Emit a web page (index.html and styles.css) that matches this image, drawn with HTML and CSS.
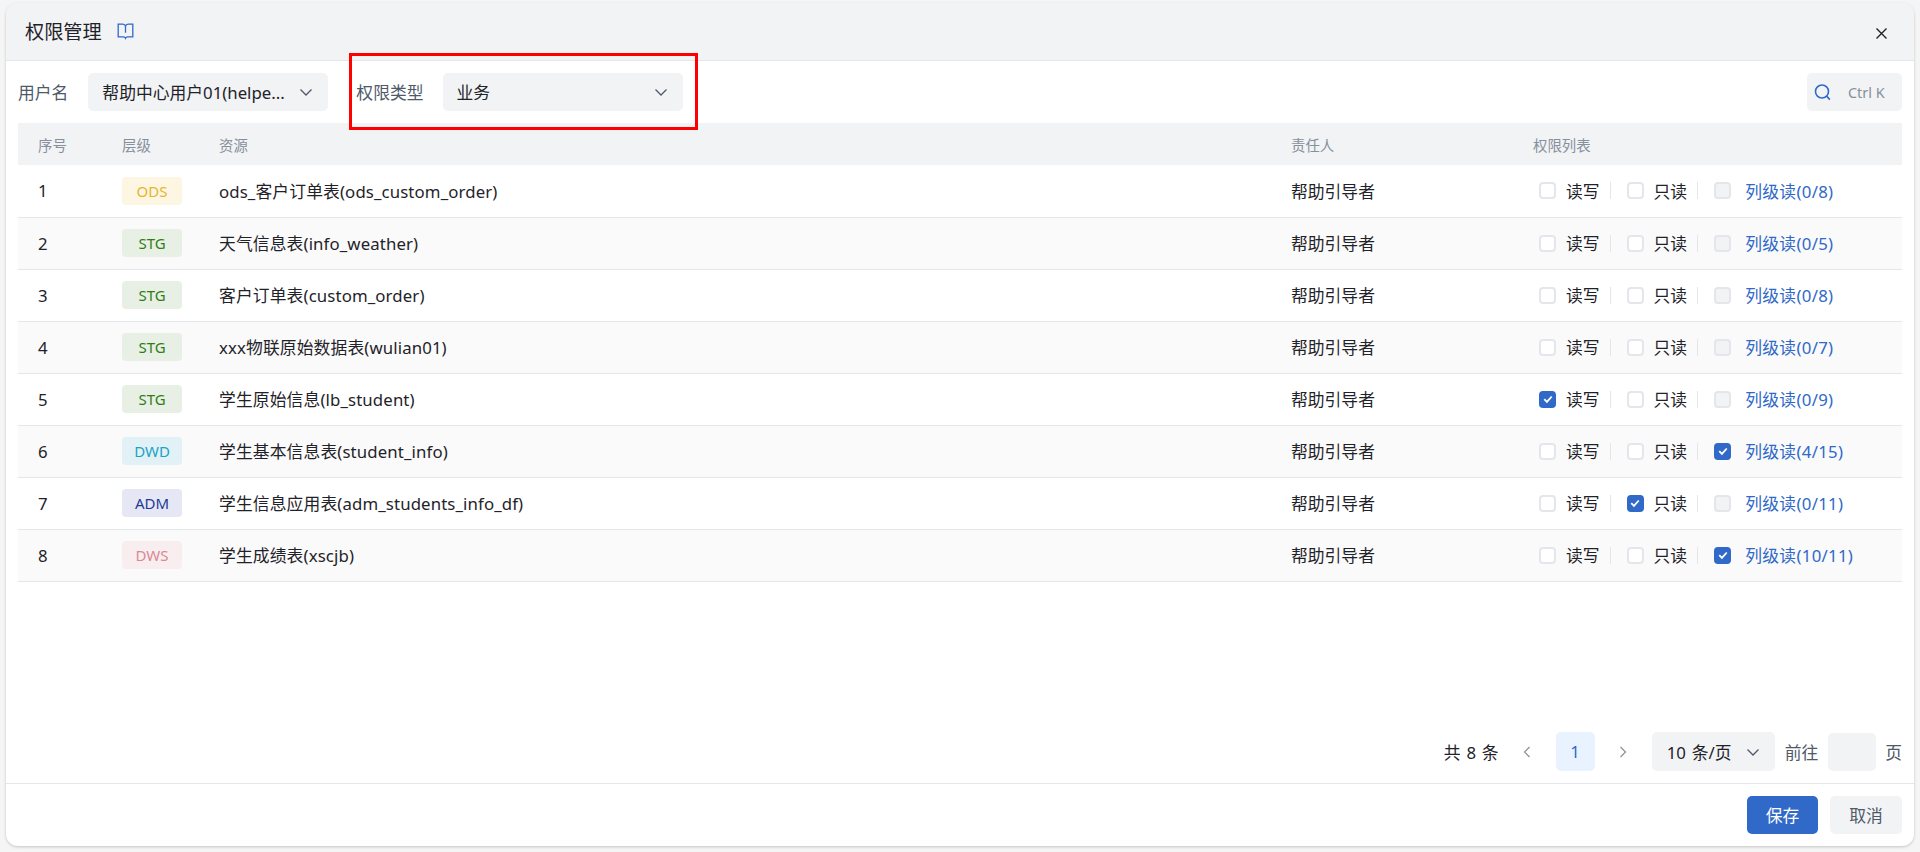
FILE: index.html
```html
<!DOCTYPE html>
<html lang="zh-CN">
<head>
    <meta charset="UTF-8">
    <title>权限管理</title>
    <link rel="stylesheet" href="styles.css">
</head>
<body>
    <div class="dialog">
        <div class="dialog-header">
            <div class="dialog-title">
                <span>权限管理</span>
                <svg class="book-icon" viewBox="0 0 17 17" fill="none" stroke="#3069c8" stroke-width="1.3">
                    <path d="M1.2 1.2h4.3c1.5 0 2.4.6 3 1.6.6-1 1.5-1.6 3-1.6h4.3v12.6h-5.3c-1 0-1.6.4-2 1.4-.4-1-1-1.4-2-1.4H1.2z"/>
                    <path d="M8.5 2.8v7"/>
                </svg>
            </div>
            <svg class="close-icon" viewBox="0 0 11 11" fill="none" stroke="#1f2329" stroke-width="1.4">
                <path d="M.5.5l10 10M10.5.5l-10 10"/>
            </svg>
        </div>

        <div class="dialog-body">
            <div class="toolbar">
                <label class="field-label">用户名</label>
                <div class="select select-user">
                    <span class="select-text">帮助中心用户01(helpe...</span>
                    <svg class="chevron" viewBox="0 0 14 14"><path d="M1.5 4.5L7 10l5.5-5.5"/></svg>
                </div>
                <label class="field-label label-type">权限类型</label>
                <div class="select select-type">
                    <span class="select-text">业务</span>
                    <svg class="chevron" viewBox="0 0 14 14"><path d="M1.5 4.5L7 10l5.5-5.5"/></svg>
                </div>
                <div class="search">
                    <svg class="search-icon" viewBox="0 0 17 17" fill="none" stroke="#3069c8" stroke-width="1.6">
                        <circle cx="8" cy="7.5" r="6.5"/>
                        <path d="M12.8 12.2l3 3.4"/>
                    </svg>
                    <span class="search-hint">Ctrl K</span>
                </div>
            </div>

            <table class="grid">
                <colgroup>
                    <col class="col-seq"><col class="col-level"><col class="col-res"><col class="col-owner"><col>
                </colgroup>
                <thead>
                    <tr><th>序号</th><th>层级</th><th>资源</th><th>责任人</th><th>权限列表</th></tr>
                </thead>
                <tbody id="rows"></tbody>
            </table>

            <div class="pager">
                <span class="total">共 8 条</span>
                <svg class="pager-arrow" viewBox="0 0 12 12"><path d="M8.5 1L3.5 6l5 5"/></svg>
                <span class="page-num">1</span>
                <svg class="pager-arrow" viewBox="0 0 12 12"><path d="M3.5 1l5 5-5 5"/></svg>
                <div class="page-size">
                    <span class="page-size-text">10 条/页</span>
                    <svg class="chevron" viewBox="0 0 14 14"><path d="M1.5 4.5L7 10l5.5-5.5"/></svg>
                </div>
                <span class="jump-text">前往</span>
                <span class="jump-input"></span>
                <span class="jump-text">页</span>
            </div>
        </div>

        <div class="dialog-footer">
            <button class="btn btn-primary">保存</button>
            <button class="btn">取消</button>
        </div>

        <div class="highlight"></div>
    </div>

    <script src="app.js"></script>
</body>
</html>
```

FILE: styles.css
```css
* {
    box-sizing: border-box;
}

body {
    margin: 0;
    height: 852px;
    overflow: hidden;
    background: #f5f5f5;
    font-family: "Noto Sans", "Noto Sans CJK SC", sans-serif;
    font-size: 16.8px;
    color: #1f2329;
}

.dialog {
    position: relative;
    display: flex;
    flex-direction: column;
    width: 1908px;
    height: 843px;
    margin: 3px 0 0 6px;
    background: #fff;
    border-radius: 12px;
    box-shadow: 0 1px 3px rgba(0,0,0,0.2);
    overflow: hidden;
}

.dialog-header {
    display: flex;
    align-items: center;
    justify-content: space-between;
    height: 58px;
    flex: none;
    padding: 0 27px 0 19px;
    background: #f2f3f5;
    border-bottom: 1px solid #e5e6eb;
}

.dialog-title {
    display: flex;
    align-items: center;
    gap: 15px;
    font-size: 19.2px;
}

.dialog-title span {
    padding-bottom: 2px;
}

.book-icon {
    width: 17px;
    height: 17px;
}

.close-icon {
    width: 11px;
    height: 11px;
    margin-top: 4px;
}

.dialog-body {
    flex: 1;
    display: flex;
    flex-direction: column;
    padding: 12px 12px 0;
}

.toolbar {
    display: flex;
    align-items: center;
    height: 38px;
}

.field-label {
    color: #4e5969;
}

.label-type {
    margin-left: 28px;
}

.select {
    display: flex;
    align-items: center;
    justify-content: space-between;
    width: 240px;
    height: 38px;
    padding: 0 15px 0 14px;
    background: #f2f3f5;
    border-radius: 5px;
}

.select-user {
    margin-left: 20px;
}

.select-type {
    margin-left: 19px;
}

.chevron {
    width: 14px;
    height: 14px;
    fill: none;
    stroke: #4e5969;
    stroke-width: 1.3;
}

.search {
    display: flex;
    align-items: center;
    width: 95px;
    height: 38px;
    margin-left: auto;
    padding-left: 7px;
    background: #f2f3f5;
    border-radius: 5px;
}

.search-icon {
    width: 17px;
    height: 17px;
}

.search-hint {
    margin-left: 17px;
    font-size: 14.4px;
    color: #86909c;
}

.grid {
    width: 100%;
    margin-top: 12px;
    border-collapse: collapse;
    table-layout: fixed;
}

.col-seq { width: 104px; }
.col-level { width: 97px; }
.col-res { width: 1072px; }
.col-owner { width: 242px; }

.grid th {
    height: 42px;
    padding: 0;
    background: #f2f3f5;
    font-size: 14.4px;
    font-weight: normal;
    text-align: left;
    color: #86909c;
}

.grid th:first-child,
.grid td:first-child {
    padding-left: 20px;
}

.grid td {
    height: 52px;
    padding: 0;
    border-bottom: 1px solid #e5e6eb;
}

.grid tbody tr:nth-child(even) td {
    background: #fafafa;
}

.resource {
    letter-spacing: 0.12px;
}

.level {
    display: block;
    width: 60px;
    height: 28px;
    line-height: 28px;
    font-size: 15px;
    text-align: center;
    border-radius: 4px;
}

.level-ods { background: #fdf6e3; color: #e6b52e; }
.level-stg { background: #e8f0e6; color: #2f7d12; }
.level-dwd { background: #e1f1f6; color: #1aa3c4; }
.level-adm { background: #e5e8f4; color: #1f3a96; }
.level-dws { background: #f8edef; color: #d98a94; }

.perms {
    display: flex;
    align-items: center;
    padding-left: 6px;
}

.perm {
    display: flex;
    align-items: center;
}

.box {
    display: flex;
    align-items: center;
    justify-content: center;
    width: 17px;
    height: 17px;
    border: 2px solid #e5e6eb;
    border-radius: 4px;
    background: #fff;
}

.box svg {
    width: 10px;
    height: 10px;
}

.box.disabled {
    background: #f2f3f5;
}

.box.checked {
    background: #3069c8;
    border-color: #3069c8;
}

.perm-text {
    margin-left: 10px;
}

.perm-sep {
    width: 1px;
    height: 17px;
    margin: 0 16px 0 10px;
    background: #e5e6eb;
}

.column-link {
    margin-left: 14px;
    color: #3069c8;
    letter-spacing: 0.3px;
}

.pager {
    display: flex;
    align-items: center;
    justify-content: flex-end;
    height: 39px;
    margin-top: auto;
    margin-bottom: 12px;
}

.total {
    margin-right: 22px;
    word-spacing: 1.5px;
}

.pager-arrow {
    width: 12px;
    height: 12px;
    fill: none;
    stroke: #86909c;
    stroke-width: 1.2;
}

.page-num {
    width: 39px;
    height: 39px;
    margin: 0 22px 0 23px;
    line-height: 39px;
    text-align: center;
    color: #3069c8;
    background: #e8f3ff;
    border-radius: 5px;
}

.page-size {
    display: flex;
    align-items: center;
    justify-content: space-between;
    width: 123px;
    height: 39px;
    margin: 0 10px 0 23px;
    padding: 0 15px;
    background: #f2f3f5;
    border-radius: 5px;
}

.page-size-text {
    word-spacing: 1.5px;
}

.jump-text {
    color: #4e5969;
}

.jump-input {
    width: 48px;
    height: 38px;
    margin: 0 9px 0 10px;
    background: #f2f3f5;
    border-radius: 5px;
}

.dialog-footer {
    display: flex;
    justify-content: flex-end;
    gap: 12px;
    flex: none;
    height: 63px;
    padding: 12px 12px 0 0;
    border-top: 1px solid #e5e6eb;
}

.btn {
    width: 72px;
    height: 38px;
    padding: 0;
    border: none;
    border-radius: 5px;
    background: #f2f3f5;
    color: #4e5969;
    font-family: inherit;
    font-size: 16.8px;
}

.btn-primary {
    width: 71px;
    background: #3069c8;
    color: #fff;
}

.highlight {
    position: absolute;
    left: 343px;
    top: 50px;
    width: 349px;
    height: 77px;
    border: 3px solid #f00;
}
```

FILE: app.js
```js
const rows = [
    ['ODS', 'ods', 'ods_客户订单表(ods_custom_order)', 0, 0, 0, '0/8'],
    ['STG', 'stg', '天气信息表(info_weather)', 0, 0, 0, '0/5'],
    ['STG', 'stg', '客户订单表(custom_order)', 0, 0, 0, '0/8'],
    ['STG', 'stg', 'xxx物联原始数据表(wulian01)', 0, 0, 0, '0/7'],
    ['STG', 'stg', '学生原始信息(lb_student)', 1, 0, 0, '0/9'],
    ['DWD', 'dwd', '学生基本信息表(student_info)', 0, 0, 1, '4/15'],
    ['ADM', 'adm', '学生信息应用表(adm_students_info_df)', 0, 1, 0, '0/11'],
    ['DWS', 'dws', '学生成绩表(xscjb)', 0, 0, 1, '10/11']
];

const tick = '<svg viewBox="0 0 12 12" fill="none" stroke="#fff" stroke-width="2.2"><path d="M1.5 6.2l3.2 3.2L10.5 3"/></svg>';

function box(checked, disabled) {
    const cls = checked ? 'checked' : (disabled ? 'disabled' : '');
    return `<span class="box ${cls}">${checked ? tick : ''}</span>`;
}

document.getElementById('rows').innerHTML = rows.map((r, i) => `
    <tr>
        <td>${i + 1}</td>
        <td><span class="level level-${r[1]}">${r[0]}</span></td>
        <td class="resource">${r[2]}</td>
        <td>帮助引导者</td>
        <td>
            <div class="perms">
                <span class="perm">${box(r[3])}<span class="perm-text">读写</span></span>
                <span class="perm-sep"></span>
                <span class="perm">${box(r[4])}<span class="perm-text">只读</span></span>
                <span class="perm-sep"></span>
                <span class="perm">${box(r[5], true)}<span class="column-link">列级读(${r[6]})</span></span>
            </div>
        </td>
    </tr>`).join('');
```
